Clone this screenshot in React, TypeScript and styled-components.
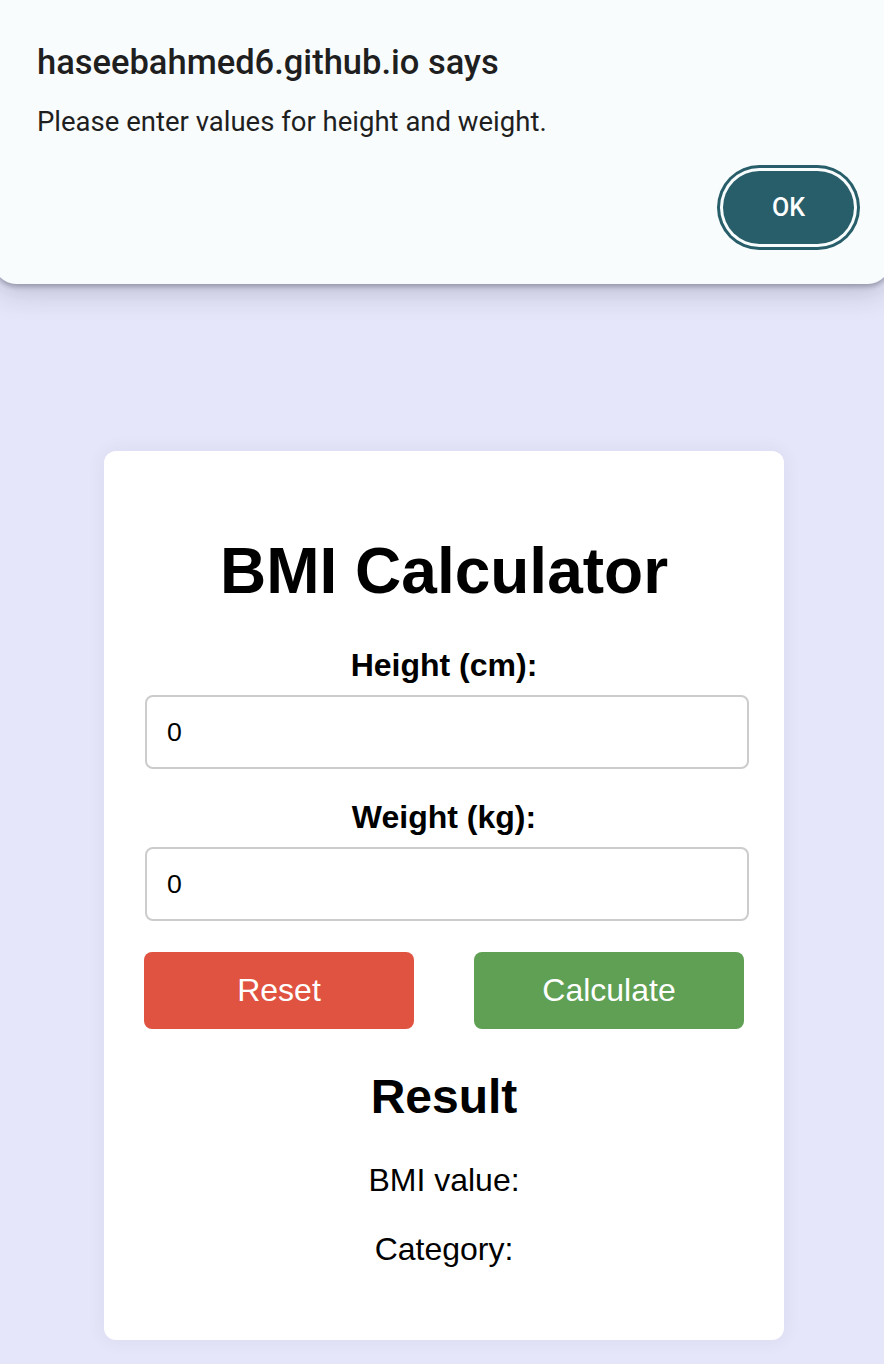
import React from "react";
import styled, { createGlobalStyle } from "styled-components";

const GlobalStyle = createGlobalStyle`
  html, body {
    margin: 0;
    padding: 0;
    background: #e6e6fa;
  }
  body {
    font-family: "Liberation Sans", Arial, sans-serif;
    overflow: hidden;
  }
  * { box-sizing: border-box; }
`;

const Page = styled.div`
  position: relative;
  min-height: 1364px;
  background: #e6e6fa;
  display: flex;
  justify-content: center;
  padding: 451px 0 0 4px;
`;

const Card = styled.div`
  width: 680px;
  height: 889px;
  background: #ffffff;
  border-radius: 12px;
  box-shadow: 0 0 18px rgba(60, 60, 120, 0.08);
  padding: 83px 40px 40px;
  display: flex;
  flex-direction: column;
  align-items: stretch;
`;

const Title = styled.h1`
  margin: 0 0 39px;
  font-size: 64px;
  line-height: 74px;
  font-weight: 700;
  text-align: center;
  color: #000;
`;

const FieldLabel = styled.label`
  display: block;
  margin: 0 0 11px;
  font-size: 32px;
  line-height: 37px;
  font-weight: 700;
  text-align: center;
  color: #000;
`;

const NumberInput = styled.input<{ $after: number }>`
  display: block;
  width: calc(100% + 4px);
  margin: 0 0 ${(p) => p.$after}px 1px;
  height: 74px;
  padding: 0 20px;
  border: 2px solid #cccccc;
  border-radius: 8px;
  font-family: "Liberation Sans", Arial, sans-serif;
  font-size: 26.67px;
  color: #000;
  background: #fff;
  outline: none;
`;

const ButtonRow = styled.div`
  display: flex;
  justify-content: space-between;
  margin-bottom: 40px;
`;

const ActionButton = styled.button<{ $color: string }>`
  width: 270px;
  height: 77px;
  border: none;
  border-radius: 8px;
  background: ${(p) => p.$color};
  color: #fff;
  font-family: "Liberation Sans", Arial, sans-serif;
  font-size: 32px;
  cursor: pointer;
`;

const ResultTitle = styled.h2`
  margin: 0 0 38px;
  font-size: 48px;
  line-height: 55px;
  font-weight: 700;
  text-align: center;
  color: #000;
`;

const ResultLine = styled.p`
  margin: 0 0 32px;
  font-size: 32px;
  line-height: 37px;
  text-align: center;
  color: #000;
`;

const Dialog = styled.div`
  position: absolute;
  top: -24px;
  left: -6px;
  right: -6px;
  height: 308px;
  background: #f8fcfd;
  border-radius: 22px;
  box-shadow: 0 3px 4px rgba(40, 40, 60, 0.28), 0 8px 28px rgba(40, 40, 70, 0.22);
  padding: 66px 36px 0 43px;
  display: flex;
  flex-direction: column;
  font-family: Roboto, "Noto Sans", sans-serif;
  color: #1f1f1f;
`;

const DialogTitle = styled.div`
  font-size: 34.5px;
  line-height: 40px;
  font-weight: 500;
  margin-bottom: 24px;
`;

const DialogMessage = styled.div`
  font-size: 27.5px;
  line-height: 32px;
  font-weight: 400;
  margin-bottom: 33px;
`;

const DialogActions = styled.div`
  display: flex;
  justify-content: flex-end;
`;

const OkButton = styled.button`
  width: 131px;
  height: 73px;
  border: none;
  border-radius: 999px;
  background: #275e69;
  color: #fff;
  font-family: Roboto, "Noto Sans", sans-serif;
  font-size: 25px;
  font-weight: 500;
  box-shadow: 0 0 0 3px #f8fcfd, 0 0 0 6px #275e69;
  cursor: pointer;
`;

export default function App() {
  return (
    <>
      <GlobalStyle />
      <Page>
        <Card>
          <Title>BMI Calculator</Title>
          <FieldLabel htmlFor="height">Height (cm):</FieldLabel>
          <NumberInput id="height" type="number" defaultValue="0" $after={30} />
          <FieldLabel htmlFor="weight">Weight (kg):</FieldLabel>
          <NumberInput id="weight" type="number" defaultValue="0" $after={31} />
          <ButtonRow>
            <ActionButton $color="#e15341">Reset</ActionButton>
            <ActionButton $color="#60a054">Calculate</ActionButton>
          </ButtonRow>
          <ResultTitle>Result</ResultTitle>
          <ResultLine>BMI value:</ResultLine>
          <ResultLine>Category:</ResultLine>
        </Card>
        <Dialog role="alertdialog">
          <DialogTitle>haseebahmed6.github.io says</DialogTitle>
          <DialogMessage>Please enter values for height and weight.</DialogMessage>
          <DialogActions>
            <OkButton>OK</OkButton>
          </DialogActions>
        </Dialog>
      </Page>
    </>
  );
}
